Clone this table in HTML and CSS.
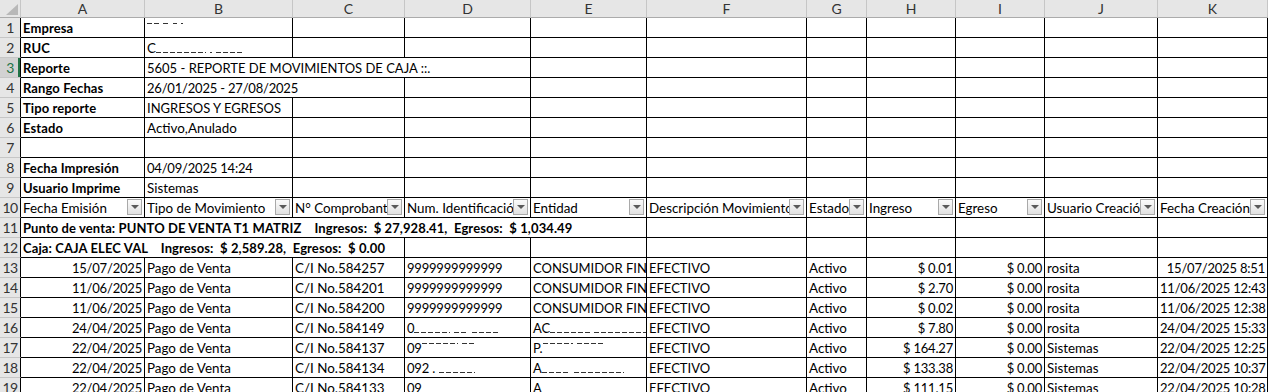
FILE: index.html
```html
<!DOCTYPE html>
<html lang="es">
<head>
<meta charset="utf-8">
<title>Reporte de movimientos de caja</title>
<link rel="stylesheet" href="styles.css">
</head>
<body>
<div class="sheet">
  <div class="row hdr">
    <div class="corner"><svg class="tri" width="14" height="13" viewBox="0 0 14 13"><polygon points="1,12 13,12 13,1" fill="#b8b8b8"/></svg></div>
    <div class="ch">A</div><div class="ch">B</div><div class="ch">C</div><div class="ch">D</div><div class="ch">E</div><div class="ch">F</div><div class="ch">G</div><div class="ch">H</div><div class="ch">I</div><div class="ch">J</div><div class="ch">K</div>
  </div>

  <div class="row">
    <div class="rh">1</div>
    <div class="c b">Empresa</div>
    <div class="c"><span class="rd top w12"></span><span class="rd top w6 gap"></span><span class="rd top w4 gap"></span><span class="rd top w2 gap"></span></div>
    <div class="c"></div><div class="c"></div><div class="c"></div><div class="c"></div><div class="c"></div><div class="c"></div><div class="c"></div><div class="c"></div><div class="c"></div>
  </div>

  <div class="row">
    <div class="rh">2</div>
    <div class="c b">RUC</div>
    <div class="c">C<span class="rd bot w50"></span><span class="rd bot w2 gap"></span><span class="rd bot w28 gap"></span></div>
    <div class="c"></div><div class="c"></div><div class="c"></div><div class="c"></div><div class="c"></div><div class="c"></div><div class="c"></div><div class="c"></div><div class="c"></div>
  </div>

  <div class="row">
    <div class="rh sel">3</div>
    <div class="c b">Reporte</div>
    <div class="c s3 caps">5605 - REPORTE DE MOVIMIENTOS DE CAJA ::.</div>
    <div class="c"></div><div class="c"></div><div class="c"></div><div class="c"></div><div class="c"></div><div class="c"></div><div class="c"></div>
  </div>

  <div class="row">
    <div class="rh">4</div>
    <div class="c b">Rango Fechas</div>
    <div class="c s2 num">26/01/2025 - 27/08/2025</div>
    <div class="c"></div><div class="c"></div><div class="c"></div><div class="c"></div><div class="c"></div><div class="c"></div><div class="c"></div><div class="c"></div>
  </div>

  <div class="row">
    <div class="rh">5</div>
    <div class="c b">Tipo reporte</div>
    <div class="c caps">INGRESOS Y EGRESOS</div>
    <div class="c"></div><div class="c"></div><div class="c"></div><div class="c"></div><div class="c"></div><div class="c"></div><div class="c"></div><div class="c"></div><div class="c"></div>
  </div>

  <div class="row">
    <div class="rh">6</div>
    <div class="c b">Estado</div>
    <div class="c">Activo,Anulado</div>
    <div class="c"></div><div class="c"></div><div class="c"></div><div class="c"></div><div class="c"></div><div class="c"></div><div class="c"></div><div class="c"></div><div class="c"></div>
  </div>

  <div class="row">
    <div class="rh">7</div>
    <div class="c"></div><div class="c"></div>
    <div class="c"></div><div class="c"></div><div class="c"></div><div class="c"></div><div class="c"></div><div class="c"></div><div class="c"></div><div class="c"></div><div class="c"></div>
  </div>

  <div class="row">
    <div class="rh">8</div>
    <div class="c b">Fecha Impresión</div>
    <div class="c num">04/09/2025 14:24</div>
    <div class="c"></div><div class="c"></div><div class="c"></div><div class="c"></div><div class="c"></div><div class="c"></div><div class="c"></div><div class="c"></div><div class="c"></div>
  </div>

  <div class="row">
    <div class="rh">9</div>
    <div class="c b">Usuario Imprime</div>
    <div class="c">Sistemas</div>
    <div class="c"></div><div class="c"></div><div class="c"></div><div class="c"></div><div class="c"></div><div class="c"></div><div class="c"></div><div class="c"></div><div class="c"></div>
  </div>

  <div class="row">
    <div class="rh">10</div>
    <div class="c f">Fecha Emisión<span class="fb"></span></div>
    <div class="c f">Tipo de Movimiento<span class="fb"></span></div>
    <div class="c f">N° Comprobante<span class="fb"></span></div>
    <div class="c f">Num. Identificación<span class="fb"></span></div>
    <div class="c f">Entidad<span class="fb"></span></div>
    <div class="c f">Descripción Movimiento<span class="fb"></span></div>
    <div class="c f">Estado<span class="fb"></span></div>
    <div class="c f">Ingreso<span class="fb"></span></div>
    <div class="c f">Egreso<span class="fb"></span></div>
    <div class="c f">Usuario Creación<span class="fb"></span></div>
    <div class="c f">Fecha Creación<span class="fb"></span></div>
  </div>

  <div class="row">
    <div class="rh">11</div>
    <div class="c b s5">Punto de venta: PUNTO DE VENTA T1 MATRIZ    Ingresos:  $ 27,928.41,  Egresos:  $ 1,034.49</div>
    <div class="c"></div><div class="c"></div><div class="c"></div><div class="c"></div><div class="c"></div><div class="c"></div>
  </div>

  <div class="row">
    <div class="rh">12</div>
    <div class="c b s3">Caja: CAJA ELEC VAL    Ingresos:  $ 2,589.28,  Egresos:  $ 0.00</div>
    <div class="c"></div><div class="c"></div><div class="c"></div><div class="c"></div><div class="c"></div><div class="c"></div><div class="c"></div><div class="c"></div>
  </div>

  <div class="row">
    <div class="rh">13</div>
    <div class="c r">15/07/2025</div><div class="c">Pago de Venta</div><div class="c">C/I No.584257</div><div class="c num">9999999999999</div><div class="c caps">CONSUMIDOR FINAL</div><div class="c caps">EFECTIVO</div><div class="c">Activo</div><div class="c r">$ 0.01</div><div class="c r">$ 0.00</div><div class="c">rosita</div><div class="c r">15/07/2025 8:51</div>
  </div>

  <div class="row">
    <div class="rh">14</div>
    <div class="c r">11/06/2025</div><div class="c">Pago de Venta</div><div class="c">C/I No.584201</div><div class="c num">9999999999999</div><div class="c caps">CONSUMIDOR FINAL</div><div class="c caps">EFECTIVO</div><div class="c">Activo</div><div class="c r">$ 2.70</div><div class="c r">$ 0.00</div><div class="c">rosita</div><div class="c r">11/06/2025 12:43</div>
  </div>

  <div class="row">
    <div class="rh">15</div>
    <div class="c r">11/06/2025</div><div class="c">Pago de Venta</div><div class="c">C/I No.584200</div><div class="c num">9999999999999</div><div class="c caps">CONSUMIDOR FINAL</div><div class="c caps">EFECTIVO</div><div class="c">Activo</div><div class="c r">$ 0.02</div><div class="c r">$ 0.00</div><div class="c">rosita</div><div class="c r">11/06/2025 12:38</div>
  </div>

  <div class="row">
    <div class="rh">16</div>
    <div class="c r">24/04/2025</div><div class="c">Pago de Venta</div><div class="c">C/I No.584149</div>
    <div class="c num">0<span class="rd bot w36"></span><span class="rd bot w14 gap"></span><span class="rd bot w26 gap"></span></div>
    <div class="c caps">AC<span class="rd bot w40"></span><span class="rd bot w52 gap"></span></div>
    <div class="c caps">EFECTIVO</div><div class="c">Activo</div><div class="c r">$ 7.80</div><div class="c r">$ 0.00</div><div class="c">rosita</div><div class="c r">24/04/2025 15:33</div>
  </div>

  <div class="row">
    <div class="rh">17</div>
    <div class="c r">22/04/2025</div><div class="c">Pago de Venta</div><div class="c">C/I No.584137</div>
    <div class="c num">09<span class="rd top w36"></span><span class="rd top w14 gap"></span></div>
    <div class="c caps">P.<span class="rd top w30"></span><span class="rd top w28 gap"></span></div>
    <div class="c caps">EFECTIVO</div><div class="c">Activo</div><div class="c r">$ 164.27</div><div class="c r">$ 0.00</div><div class="c">Sistemas</div><div class="c r">22/04/2025 12:25</div>
  </div>

  <div class="row">
    <div class="rh">18</div>
    <div class="c r">22/04/2025</div><div class="c">Pago de Venta</div><div class="c">C/I No.584134</div>
    <div class="c num">092 .<span class="rd bot w36 gap"></span></div>
    <div class="c caps">A<span class="rd bot w28"></span><span class="rd bot w50 gap"></span></div>
    <div class="c caps">EFECTIVO</div><div class="c">Activo</div><div class="c r">$ 133.38</div><div class="c r">$ 0.00</div><div class="c">Sistemas</div><div class="c r">22/04/2025 10:37</div>
  </div>

  <div class="row">
    <div class="rh">19</div>
    <div class="c r">22/04/2025</div><div class="c">Pago de Venta</div><div class="c">C/I No.584133</div><div class="c num">09</div><div class="c caps">A</div><div class="c caps">EFECTIVO</div><div class="c">Activo</div><div class="c r">$ 111.15</div><div class="c r">$ 0.00</div><div class="c">Sistemas</div><div class="c r">22/04/2025 10:28</div>
  </div>
</div>
</body>
</html>
```

FILE: styles.css
```css
* { box-sizing: border-box; }
html, body {
  margin: 0;
  padding: 0;
  background: #fff;
  overflow: hidden;
}
body {
  font-family: Lato, "Liberation Sans", sans-serif;
  font-size: 13.4px;
  color: #000;
}
.sheet {
  display: flex;
  flex-direction: column;
  width: 1268px;
  height: 392px;
  overflow: hidden;
}
.row {
  display: grid;
  grid-template-columns: 21px 124px 148px 112px 126px 116px 160px 60px 89px 89px 113px 110px;
  height: 20px;
  flex: none;
}
.row.hdr { height: 18px; }
.corner {
  background: #e6e6e6;
  border-right: 1px solid #c6c6c6;
  border-bottom: 1px solid #ababab;
  position: relative;
}
.tri {
  position: absolute;
  right: 1px;
  bottom: 1px;
}
.ch {
  background: #e6e6e6;
  border-right: 1px solid #c6c6c6;
  border-bottom: 1px solid #ababab;
  text-align: center;
  color: #333;
  line-height: 17px;
  font-size: 14px;
}
.rh {
  background: #e6e6e6;
  border-right: 1px solid #000;
  border-bottom: 1px solid #c6c6c6;
  text-align: center;
  color: #333;
  line-height: 19px;
  font-size: 14px;
  letter-spacing: -0.5px;
}
.rh.sel {
  background: #d2d2d2;
  color: #217346;
  box-shadow: inset -2px 0 0 #217346;
}
.c {
  border-right: 1px solid #000;
  border-bottom: 1px solid #000;
  padding: 0 2px;
  white-space: pre;
  overflow: hidden;
  line-height: 20px;
}
.caps { font-size: 13px; }
.num { font-size: 13px; letter-spacing: -0.2px; }
.b { font-size: 13px; font-weight: 700; letter-spacing: 0.1px; }
.r { text-align: right; font-size: 13px; letter-spacing: -0.2px; }
.s2 { grid-column: span 2; }
.s3 { grid-column: span 3; }
.s5 { grid-column: span 5; }
.f { position: relative; }
.fb {
  position: absolute;
  right: 2px;
  top: 1px;
  width: 15px;
  height: 16px;
  border: 1px solid #a9a9a9;
  background: linear-gradient(#fbfbfb, #e1e1e1);
}
.fb::after {
  content: "";
  position: absolute;
  left: 3px;
  top: 5px;
  border-left: 4px solid transparent;
  border-right: 4px solid transparent;
  border-top: 4px solid #5a5a5a;
}
.rd {
  display: inline-block;
  height: 1px;
  background: repeating-linear-gradient(90deg, #333 0 5px, transparent 5px 7px);
}
.rd.top { vertical-align: 9px; }
.rd.bot { vertical-align: 0; }
.gap { margin-left: 4px; }
.w2 { width: 2px; }
.w4 { width: 4px; }
.w6 { width: 6px; }
.w12 { width: 12px; }
.w14 { width: 14px; }
.w26 { width: 26px; }
.w28 { width: 28px; }
.w30 { width: 30px; }
.w36 { width: 36px; }
.w40 { width: 40px; }
.w50 { width: 50px; }
.w52 { width: 52px; }
```
